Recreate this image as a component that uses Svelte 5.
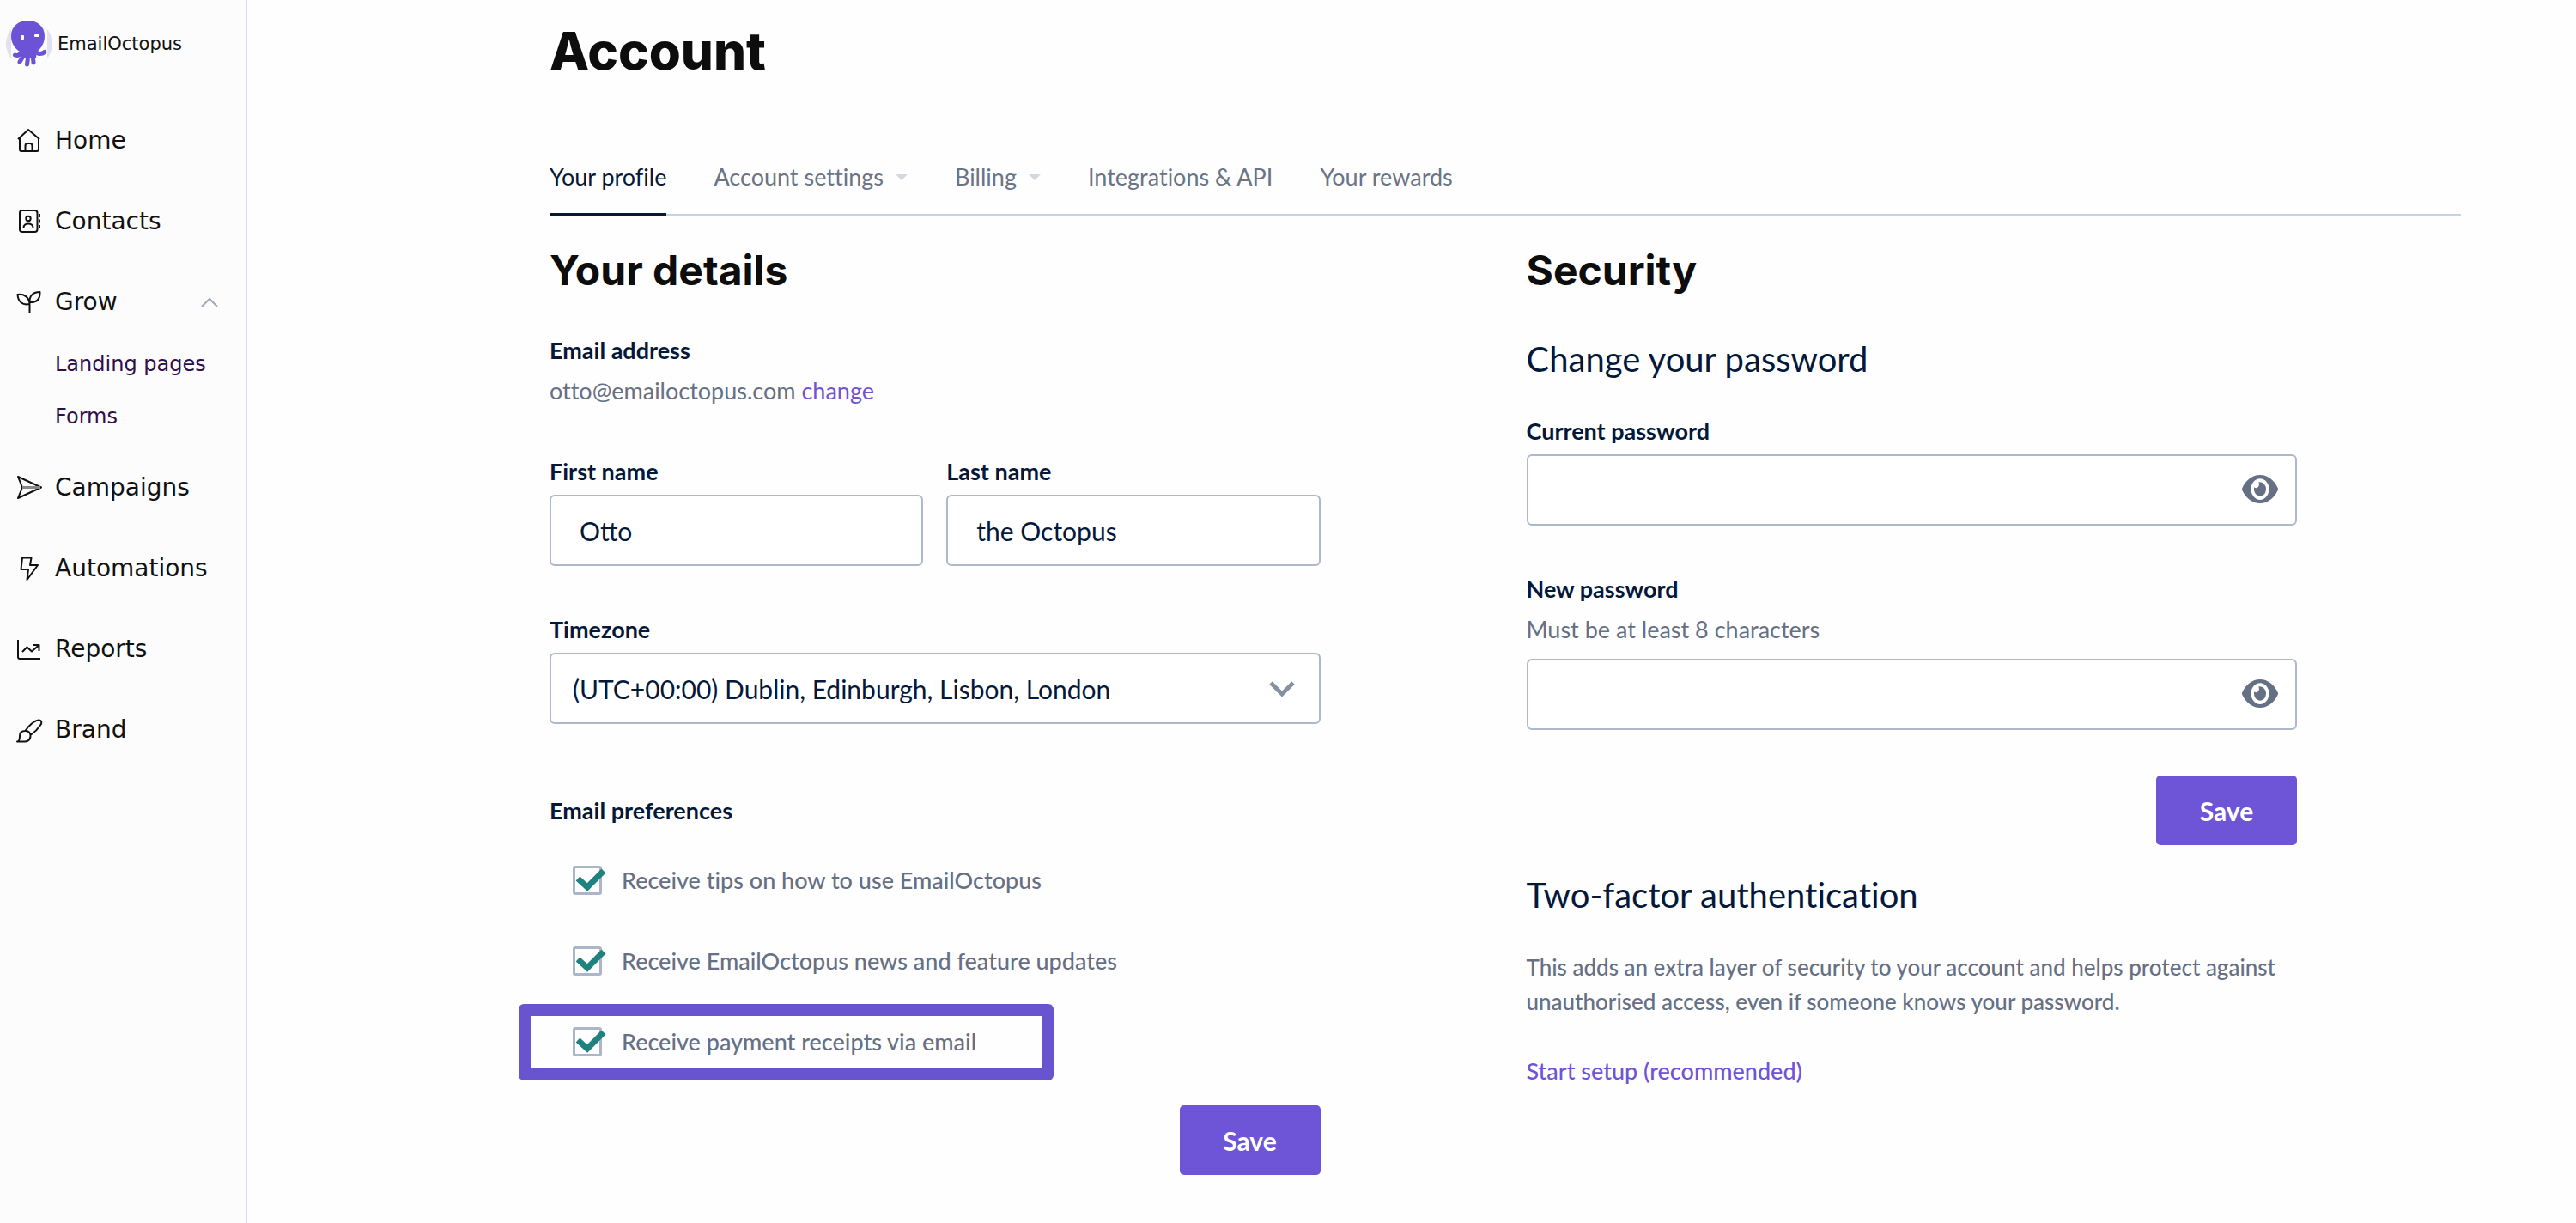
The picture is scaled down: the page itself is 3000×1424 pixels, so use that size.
<script>
  const tabs = [
    { label: 'Your profile', active: true },
    { label: 'Account settings', menu: true },
    { label: 'Billing', menu: true },
    { label: 'Integrations & API' },
    { label: 'Your rewards' }
  ];

  let firstName = $state('Otto');
  let lastName = $state('the Octopus');
  let preferences = $state([
    { label: 'Receive tips on how to use EmailOctopus', checked: true },
    { label: 'Receive EmailOctopus news and feature updates', checked: true },
    { label: 'Receive payment receipts via email', checked: true, highlight: true }
  ]);
</script>

{#snippet eye()}
  <button type="button" class="reveal" aria-label="Show password">
    <svg viewBox="0 64 576 384" preserveAspectRatio="none" aria-hidden="true">
      <path d="M572.52 241.4C518.29 135.59 410.93 64 288 64S57.68 135.64 3.48 241.41a32.35 32.35 0 0 0 0 29.19C57.71 376.41 165.07 448 288 448s230.32-71.64 284.52-177.41a32.35 32.35 0 0 0 0-29.19zM288 400a144 144 0 1 1 144-144 143.93 143.93 0 0 1-144 144zm0-240a95.31 95.31 0 0 0-25.31 3.79 47.85 47.85 0 0 1-66.9 66.9A95.78 95.78 0 1 0 288 160z" />
    </svg>
  </button>
{/snippet}

<div class="page">
  <aside class="sidebar">
    <a class="brand" href="#home">
      <svg class="logo" viewBox="0 0 54 56" aria-hidden="true">
        <circle cx="27" cy="28" r="27" fill="#e3e0f0" />
        <path d="M6 10.500A27 27 0 0 1 48 11V45A27 27 0 0 1 6 45.500Z" fill="#fdfdfe" />
        <path d="M6 19C6 8 14 1 25.500 1S45 8 45 19C45 27 41 33 36 37L35 44H17L16 37C10 33 6 27 6 19Z" fill="#6c53d6" />
        <g fill="none" stroke="#6c53d6" stroke-width="5" stroke-linecap="round">
          <path d="M18 38C16 41 13 42 10.500 41" />
          <path d="M20 42C19 45 17 47 16 49" />
          <path d="M25.500 42C25.500 46 25 49 24.500 52" />
          <path d="M31 42C31.500 46 32 48 32 50" />
          <path d="M34 36C37 41 42 40 45 37.500" />
        </g>
        <rect x="17" y="18" width="4" height="5" rx="1" fill="#fff" />
        <rect x="33" y="17" width="6" height="3" rx="1" fill="#fff" />
      </svg>
      <span>EmailOctopus</span>
    </a>

    <nav aria-label="Main">
      <ul class="menu">
        <li>
          <a href="#home">
            <svg class="icon" viewBox="0 2 30 32" aria-hidden="true">
              <path d="M2 16L14 5L27 16M4 14.500V28Q4 30 6 30H24Q26 30 26 28V14.500M10.500 30V24Q10.500 21 13 21H16Q18.500 21 18.500 24V30" />
            </svg>
            Home
          </a>
        </li>
        <li>
          <a href="#contacts">
            <svg class="icon" viewBox="0 2 30 32" aria-hidden="true">
              <rect x="4" y="5" width="20.500" height="25" rx="3" />
              <circle cx="14" cy="14.500" r="2.700" />
              <path d="M8.500 25C8.500 19 19.500 19 19.500 25" />
              <path d="M27.500 9V13M27.500 15.500V19.500M27.500 22V26" stroke-width="1" />
            </svg>
            Contacts
          </a>
        </li>
        <li>
          <a href="#grow">
            <svg class="icon" viewBox="0 2 30 32" aria-hidden="true">
              <path d="M15.500 31V16M1.500 9C9 8 15 12 15.500 20C7 22 2 17 1.500 9ZM27.500 6C20 6 15 10 15.500 18C24 18.500 28 14 27.500 6Z" />
            </svg>
            Grow
            <svg class="chevron" viewBox="0 0 20 12" aria-hidden="true"><path d="M1 11L10 2L19 11" /></svg>
          </a>
          <ul class="submenu">
            <li><a href="#landing-pages">Landing pages</a></li>
            <li><a href="#forms">Forms</a></li>
          </ul>
        </li>
        <li>
          <a href="#campaigns">
            <svg class="icon" viewBox="0 2 30 32" aria-hidden="true">
              <path d="M2 5L29 17.500L2 30L7 17.500Z" />
              <path d="M7 17.500H28" stroke="#888" stroke-width="3" />
            </svg>
            Campaigns
          </a>
        </li>
        <li>
          <a href="#automations">
            <svg class="icon" viewBox="0 2 30 32" aria-hidden="true">
              <path d="M7 5.500H17.500L16 14H25L12.500 31L14 19H5.500Z" />
            </svg>
            Automations
          </a>
        </li>
        <li>
          <a href="#reports">
            <svg class="icon" viewBox="0 2 30 32" aria-hidden="true">
              <path d="M2 7V27Q2 29 4 29H28M7 21L12.500 15.500L18 20.500L26 13.500M19 13H26.500V20" />
            </svg>
            Reports
          </a>
        </li>
        <li>
          <a href="#brand">
            <svg class="icon" viewBox="0 2 30 32" aria-hidden="true">
              <path d="M10.500 19C14 13 21 7 26 6.500C30 6.500 30 10 28 12.500C25 17 21 21 16.500 24M10.500 19C6 19 4 21.500 4 25C4 29 3 31.500 1 31.500H10C14.500 31.500 17 28 16.500 24C16 21 13.500 19 10.500 19Z" />
            </svg>
            Brand
          </a>
        </li>
      </ul>
    </nav>
  </aside>

  <main>
    <h1>Account</h1>

    <nav class="tabs" aria-label="Account">
      {#each tabs as tab}
        <a href="#{tab.label.toLowerCase().replaceAll(' ', '-')}" class:active={tab.active} aria-current={tab.active ? 'page' : undefined}>
          {tab.label}
          {#if tab.menu}<span class="caret" aria-hidden="true"></span>{/if}
        </a>
      {/each}
    </nav>

    <div class="columns">
      <section>
        <h2>Your details</h2>
        <form class="details">
          <div class="email">
            <strong>Email address</strong>
            <p>otto@emailoctopus.com <a href="#change">change</a></p>
          </div>

          <div class="names">
            <div class="field">
              <label for="first-name">First name</label>
              <input id="first-name" type="text" bind:value={firstName} />
            </div>
            <div class="field">
              <label for="last-name">Last name</label>
              <input id="last-name" type="text" bind:value={lastName} />
            </div>
          </div>

          <div class="field">
            <label for="timezone">Timezone</label>
            <div class="control">
              <select id="timezone">
                <option>(UTC+00:00) Dublin, Edinburgh, Lisbon, London</option>
              </select>
              <svg class="arrow" viewBox="0 0 30 18" aria-hidden="true"><path d="M2 2L15 15L28 2" /></svg>
            </div>
          </div>

          <fieldset>
            <legend>Email preferences</legend>
            {#each preferences as pref}
              <label class="check" class:highlight={pref.highlight}>
                <span class="box">
                  <input type="checkbox" bind:checked={pref.checked} />
                  {#if pref.checked}
                    <svg viewBox="0 0 40 33" aria-hidden="true"><path d="M6 15L17 25L36 6" /></svg>
                  {/if}
                </span>
                {pref.label}
              </label>
            {/each}
          </fieldset>

          <button type="button" class="save">Save</button>
        </form>
      </section>

      <section>
        <h2>Security</h2>
        <h3>Change your password</h3>
        <form class="password">
          <div class="field">
            <label for="current-password">Current password</label>
            <div class="control">
              <input id="current-password" type="password" />
              {@render eye()}
            </div>
          </div>
          <div class="field">
            <label for="new-password">New password</label>
            <p class="hint" id="password-hint">Must be at least 8 characters</p>
            <div class="control">
              <input id="new-password" type="password" aria-describedby="password-hint" />
              {@render eye()}
            </div>
          </div>
          <button type="button" class="save">Save</button>
        </form>

        <h3 class="two-factor">Two-factor authentication</h3>
        <p class="about">
          This adds an extra layer of security to your account and helps protect against
          unauthorised access, even if someone knows your password.
        </p>
        <a class="setup" href="#two-factor">Start setup (recommended)</a>
      </section>
    </div>
  </main>
</div>

<style>
  :global(body) {
    background: #fefefe;
  }

  .page {
    display: flex;
    min-height: 100vh;
    color: #04193a;
    font: 27px/32px Lato, sans-serif;
    font-variant-ligatures: none;
  }

  .page *,
  .page *::before {
    box-sizing: border-box;
  }

  a {
    color: #6e54d7;
    text-decoration: none;
  }

  p,
  h1,
  h2,
  h3,
  ul,
  fieldset {
    margin: 0;
    padding: 0;
    border: 0;
    list-style: none;
  }

  /* Sidebar */
  .sidebar {
    flex: 0 0 288px;
    background: #fcfcfc;
    border-right: 1px solid #dfdbea;
    font-family: 'DejaVu Sans', sans-serif;
  }

  .brand {
    display: flex;
    align-items: center;
    gap: 6px;
    padding: 23px 0 38px 7px;
    color: #111;
    font-size: 21px;
  }

  .logo {
    width: 54px;
    height: 56px;
  }

  .menu > li > a {
    display: flex;
    align-items: center;
    height: 94px;
    padding: 0 33px 0 19px;
    color: #111;
    font-size: 28px;
  }

  .icon {
    width: 30px;
    height: 32px;
    margin-right: 15px;
    overflow: visible;
    fill: none;
    stroke: #111;
    stroke-width: 2;
    stroke-linejoin: round;
  }

  .chevron {
    width: 20px;
    height: 12px;
    margin-left: auto;
    fill: none;
    stroke: #a0a9b8;
    stroke-width: 2;
  }

  .submenu {
    margin: -5px 0 5px;
  }

  .submenu a {
    display: block;
    padding-left: 64px;
    color: #2f0f4a;
    font-size: 24px;
    line-height: 61px;
  }

  /* Main area */
  main {
    flex: 1;
    padding: 23px 134px 56px 352px;
  }

  h1,
  h2 {
    color: #0d0d0d;
    font-family: Inter, sans-serif;
    font-weight: 700;
  }

  h1 {
    font-size: 60px;
    font-weight: 800;
    line-height: 72px;
  }

  .tabs {
    display: flex;
    gap: 55px;
    margin-top: 95px;
    box-shadow: inset 0 -2px #c8d3df;
  }

  .tabs a {
    display: flex;
    align-items: center;
    gap: 14px;
    padding-bottom: 26px;
    border-bottom: 3px solid transparent;
    color: #6a7485;
  }

  .tabs .active {
    border-color: #04193a;
    color: #04193a;
  }

  .caret {
    border: 7px solid transparent;
    border-top-color: #d3d8dd;
    border-bottom: 0;
  }

  .columns {
    display: grid;
    grid-template-columns: 1fr 1fr;
    gap: 240px;
    padding: 36px 191px 0 0;
  }

  h2 {
    font-size: 48px;
    line-height: 56px;
  }

  h3 {
    margin-top: 51px;
    font-size: 40px;
    font-weight: 400;
    line-height: 48px;
  }

  .details,
  .password,
  .field {
    display: flex;
    flex-direction: column;
  }

  .details {
    margin-top: 49px;
  }

  .email {
    display: grid;
    gap: 15px;
    margin-bottom: 62px;
  }

  .email p,
  .hint,
  .about,
  .check {
    color: #667085;
  }

  .names {
    display: grid;
    grid-template-columns: 1fr 1fr;
    gap: 27px;
    margin-bottom: 58px;
  }

  .field > label,
  legend {
    padding: 0;
    font-weight: 700;
  }

  .field > label {
    margin-bottom: 11px;
  }

  input[type='text'],
  input[type='password'],
  select {
    width: 100%;
    height: 83px;
    margin: 0;
    padding: 0 33px;
    border: 2px solid #adb8cc;
    border-radius: 6px;
    background: #fff;
    color: #04193a;
    font: 30px Lato, sans-serif;
  }

  select {
    padding: 0 25px;
    appearance: none;
  }

  .control {
    position: relative;
    display: flex;
  }

  .arrow {
    position: absolute;
    top: 33px;
    right: 30px;
    width: 30px;
    height: 18px;
    fill: none;
    stroke: #8690a3;
    stroke-width: 5;
    pointer-events: none;
  }

  fieldset {
    margin: 85px 0 27px;
  }

  legend {
    margin-bottom: 18px;
  }

  .check {
    position: relative;
    display: flex;
    align-items: center;
    gap: 23px;
    height: 94px;
    padding-left: 27px;
    font-weight: 500;
  }

  .box {
    position: relative;
    display: flex;
  }

  .box input {
    width: 34px;
    height: 34px;
    margin: 0;
    border: 3px solid #adb5ca;
    border-radius: 3px;
    background: #fff;
    appearance: none;
  }

  .box svg {
    position: absolute;
    top: 0;
    left: 0;
    width: 40px;
    height: 33px;
    fill: none;
    stroke: #1f827f;
    stroke-width: 7;
    pointer-events: none;
  }

  .highlight::before {
    position: absolute;
    top: 3px;
    bottom: 2px;
    left: -36px;
    width: 623px;
    border: 14px solid #6954cf;
    border-radius: 6px;
    content: '';
  }

  .save {
    align-self: flex-end;
    width: 164px;
    height: 81px;
    padding: 0;
    border: 0;
    border-radius: 5px;
    background: #6e54d7;
    color: #fff;
    font: 700 30px Lato, sans-serif;
  }

  /* Security */
  .password {
    gap: 58px;
    margin-top: 44px;
  }

  .password .save {
    margin-top: -5px;
  }

  .field > .hint {
    margin: 4px 0 18px;
  }

  .reveal {
    position: absolute;
    top: 24px;
    right: 22px;
    display: flex;
    padding: 0;
    border: 0;
    background: none;
  }

  .reveal svg {
    width: 42px;
    height: 33px;
    fill: #667085;
  }

  .two-factor {
    margin-top: 34px;
  }

  .about {
    margin: 40px 0 45px;
    font-size: 26px;
    font-weight: 500;
    line-height: 40px;
  }

  .setup {
    font-weight: 500;
  }
</style>
